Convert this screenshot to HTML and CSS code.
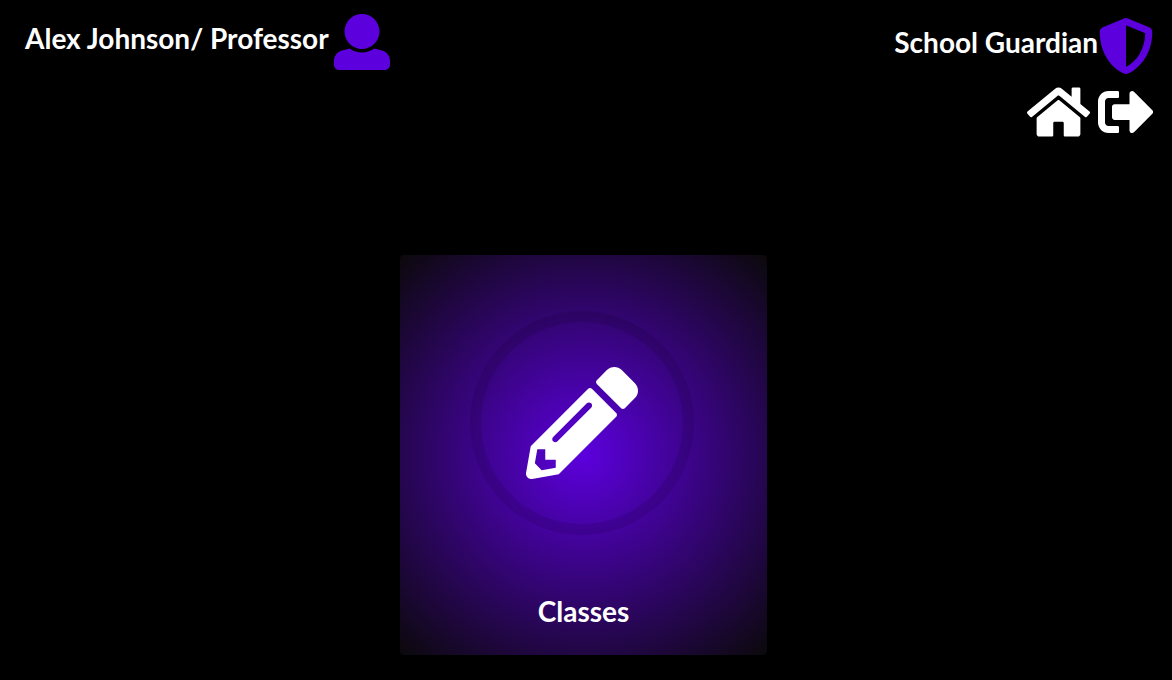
FILE: index.html
```html
<!DOCTYPE html>
<html lang="en">
<head>
<meta charset="utf-8">
<meta name="viewport" content="width=device-width, initial-scale=1">
<title>School Guardian</title>
<link rel="stylesheet" href="styles.css">
</head>
<body>
<header class="topbar">
  <h2 class="title title-user">
    <span class="title-text">Alex Johnson/ Professor</span>
    <svg class="icon accent" viewBox="0 0 512 512" aria-hidden="true"><path d="M256 0c88.366 0 160 71.634 160 160s-71.634 160-160 160S96 248.366 96 160 167.634 0 256 0zm183.283 333.821l-71.313-17.828c-74.923 53.89-165.738 41.864-223.94 0l-71.313 17.828C29.981 344.505 0 382.903 0 426.955V464c0 26.51 21.49 48 48 48h416c26.51 0 48-21.49 48-48v-37.045c0-44.052-29.981-82.45-72.717-93.134z"/></svg>
  </h2>
  <div class="brand">
    <h2 class="title">
      <span class="title-text">School Guardian</span>
      <svg class="icon accent" viewBox="0 0 512 512" aria-hidden="true"><path d="M496 128c0 221.282-135.934 344.645-221.539 380.308a48 48 0 0 1-36.923 0C130.495 463.713 16 326.487 16 128a48 48 0 0 1 29.539-44.308l192-80a48 48 0 0 1 36.923 0l192 80A48 48 0 0 1 496 128zM256 446.313l.066.034c93.735-46.646 172.497-156.308 175.817-307.729L256 65.333v380.98z"/></svg>
    </h2>
    <nav class="actions">
      <a class="action" href="#home" aria-label="Home"><svg class="icon icon-wide" viewBox="0 0 576 512" aria-hidden="true"><path d="M488 312.7V456c0 13.3-10.7 24-24 24H348c-6.6 0-12-5.4-12-12V356c0-6.6-5.4-12-12-12h-72c-6.6 0-12 5.4-12 12v112c0 6.6-5.4 12-12 12H112c-13.3 0-24-10.7-24-24V312.7c0-3.6 1.6-7 4.4-9.3l188-154.8c4.4-3.6 10.8-3.6 15.3 0l188 154.8c2.7 2.3 4.3 5.7 4.3 9.3zm83.6-60.9L488 182.9V44.4c0-6.6-5.4-12-12-12h-56c-6.6 0-12 5.4-12 12V117l-89.5-73.7c-17.7-14.6-43.3-14.6-61 0L4.4 251.8c-5.1 4.2-5.8 11.8-1.6 16.9l25.5 31c4.2 5.1 11.8 5.8 16.9 1.6l235.2-193.7c4.4-3.6 10.8-3.6 15.3 0l235.2 193.7c5.1 4.2 12.7 3.5 16.9-1.6l25.5-31c4.2-5.2 3.4-12.7-1.7-16.9z"/></svg></a>
      <button class="action" type="button" aria-label="Sign out"><svg class="icon" viewBox="0 0 512 512" aria-hidden="true"><path d="M497 273L329 441c-15 15-41 4.5-41-17v-96H152c-13.3 0-24-10.7-24-24v-96c0-13.3 10.7-24 24-24h136V88c0-21.4 25.9-32 41-17l168 168c9.3 9.4 9.3 24.6 0 34zM192 436v-40c0-6.6-5.4-12-12-12H96c-17.7 0-32-14.3-32-32V160c0-17.7 14.3-32 32-32h84c6.6 0 12-5.4 12-12V76c0-6.6-5.4-12-12-12H96c-53 0-96 43-96 96v192c0 53 43 96 96 96h84c6.6 0 12-5.4 12-12z"/></svg></button>
    </nav>
  </div>
</header>
<main class="menu">
  <a class="card" href="#classes">
    <span class="card-icon"><svg class="pencil" viewBox="0 0 512 512" aria-hidden="true"><path fill-rule="evenodd" d="M497.9 142.1l-46.1 46.1c-4.7 4.7-12.3 4.7-17 0l-111-111c-4.7-4.7-4.7-12.3 0-17l46.1-46.1c18.7-18.7 49.1-18.7 67.9 0l60.1 60.1c18.8 18.7 18.8 49.1 0 67.9zM284.2 99.8L21.6 362.4.4 483.9c-2.9 16.4 11.4 30.6 27.8 27.8l121.5-21.3 262.6-262.6c4.7-4.7 4.7-12.3 0-17l-111-111c-4.8-4.7-12.4-4.7-17.1 0zM124.1 339.9c-5.5-5.5-5.5-14.3 0-19.8l154-154c5.5-5.5 14.3-5.5 19.8 0s5.5 14.3 0 19.8l-154 154c-5.5 5.5-14.3 5.5-19.8 0zM88 424h48v36.3l-64.5 11.3-31.1-31.1L51.7 376H88v48z"/></svg></span>
    <span class="card-label">Classes</span>
  </a>
</main>
</body>
</html>
```
FILE: styles.css
```css
* {
  box-sizing: border-box;
}

body {
  margin: 0;
  background: #000;
  color: #fff;
  font-family: Lato, "Liberation Sans", sans-serif;
}

.topbar {
  display: flex;
  justify-content: space-between;
  align-items: flex-start;
  padding: 14px 18px 0 25px;
}

.title {
  display: flex;
  align-items: center;
  margin: 0;
  font-size: 28px;
  line-height: 36px;
  font-weight: 700;
}

.title-user {
  gap: 5px;
}

.title-text {
  padding-bottom: 8px;
}

.icon {
  display: block;
  width: 56px;
  height: 56px;
  fill: currentColor;
}

.icon-wide {
  width: 63px;
}

.accent {
  color: #5c00dd;
}

.brand {
  display: flex;
  flex-direction: column;
  align-items: flex-end;
  gap: 10px;
  padding-top: 4px;
}

.actions {
  display: flex;
  gap: 8px;
}

.action {
  padding: 0;
  border: 0;
  background: none;
  color: #fff;
  cursor: pointer;
}

.menu {
  display: grid;
  grid-template-columns: repeat(3, 1fr);
  padding: 115px 38px 25px 33px;
}

.card {
  grid-column: 2;
  display: flex;
  flex-direction: column;
  align-items: center;
  gap: 58px;
  padding: 56px 0 26px;
  border-radius: 4px;
  background: radial-gradient(circle, #5c00dd, #0b090b);
  color: #fff;
  text-decoration: none;
}

.card-icon {
  display: flex;
  align-items: center;
  justify-content: center;
  width: 224px;
  height: 224px;
  margin-right: 3px;
  border-radius: 50%;
  box-shadow: inset 0 0 0 11px rgba(0, 0, 0, 0.1);
}

.pencil {
  width: 112px;
  height: 112px;
  fill: currentColor;
}

.card-label {
  font-size: 28px;
  line-height: 36px;
  font-weight: 700;
}
```
